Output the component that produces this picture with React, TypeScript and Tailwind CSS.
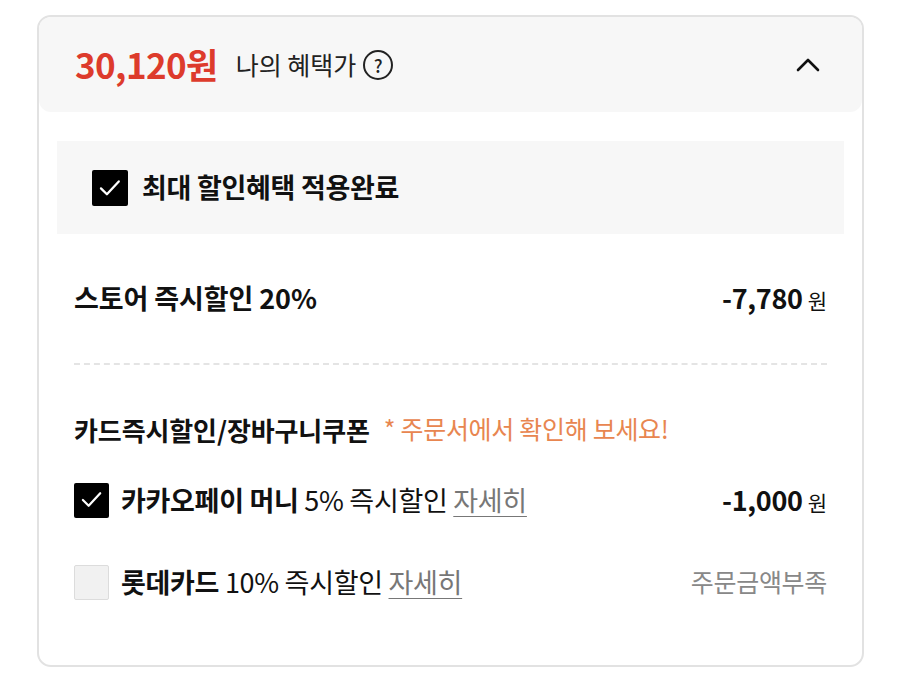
const font = "font-['Noto_Sans_CJK_KR','Noto_Sans',sans-serif]";

function Check({ on, size = 36 }: { on: boolean; size?: number }) {
  if (!on) {
    return (
      <span
        className="inline-block shrink-0 rounded-[2px] border border-[#dcdcdc] bg-[#f1f1f1]"
        style={{ width: size, height: size }}
      />
    );
  }
  return (
    <span
      className="inline-flex shrink-0 items-center justify-center rounded-[2px] bg-black"
      style={{ width: size, height: size }}
    >
      <svg width={size * 0.66} height={size * 0.66} viewBox="0 0 24 24" fill="none">
        <path d="M3 12.5l6 6L21 5.5" stroke="#fff" strokeWidth="2.3" strokeLinecap="round" strokeLinejoin="round" />
      </svg>
    </span>
  );
}

function Won({ amount }: { amount: string }) {
  return (
    <div className="flex items-baseline gap-[5px] text-[#111]">
      <span className="text-[27px] font-bold tracking-[-0.3px]">{amount}</span>
      <span className="text-[21px]">원</span>
    </div>
  );
}

export default function App() {
  return (
    <div className={`${font} min-h-[678px] bg-white pl-[37px] pt-[15px]`}>
      <div className="flex h-[652px] w-[827px] flex-col rounded-[14px] border-2 border-[#e2e2e2] bg-white">
        <header className="flex h-[95px] shrink-0 items-center justify-between rounded-[12px] bg-[#f7f7f7] pl-[36px] pr-[42px]">
          <div className="flex items-center">
            <span className="text-[35px] font-bold tracking-[-0.6px] text-[#dd3b2c]">30,120원</span>
            <span className="ml-[18px] text-[25px] text-[#222]">나의 혜택가</span>
            <span className="ml-[7px] flex h-[30px] w-[30px] items-center justify-center rounded-full border-2 border-[#222] text-[18px] font-medium leading-none text-[#222]">
              ?
            </span>
          </div>
          <svg width="24" height="16" viewBox="0 0 24 16" fill="none">
            <path d="M2 13L12 3l10 10" stroke="#111" strokeWidth="2.6" strokeLinecap="round" strokeLinejoin="round" />
          </svg>
        </header>

        <div className="mx-[18px] mt-[29px] flex h-[93px] items-center gap-[14px] bg-[#f7f7f7] pl-[35px]">
          <Check on />
          <span className="text-[27px] font-bold tracking-[-0.3px] text-[#111]">최대 할인혜택 적용완료</span>
        </div>

        <div className="mx-[35px] flex h-[129px] items-center justify-between">
          <span className="text-[27px] font-bold tracking-[-0.1px] text-[#111]">스토어 즉시할인 20%</span>
          <Won amount="-7,780" />
        </div>

        <div className="mx-[35px] border-t-2 border-dashed border-[#e4e4e4]" />

        <div className="mx-[35px] mt-[48px] flex h-[32px] items-center">
          <span className="text-[26px] font-bold tracking-[-0.1px] text-[#111]">카드즉시할인/장바구니쿠폰</span>
          <span className="ml-[14px] text-[25px] tracking-[-0.3px] text-[#e88650]">* 주문서에서 확인해 보세요!</span>
        </div>

        <div className="mx-[35px] mt-[37px] flex h-[36px] items-center justify-between">
          <div className="flex items-center gap-[12px]">
            <Check on size={35} />
            <span className="text-[27px] tracking-[-0.3px] text-[#111]">
              <b className="font-bold">카카오페이 머니</b> 5% 즉시할인{" "}
              <span className="text-[#777] underline decoration-1 underline-offset-[5px]">자세히</span>
            </span>
          </div>
          <Won amount="-1,000" />
        </div>

        <div className="mx-[35px] mt-[46px] flex h-[36px] items-center justify-between">
          <div className="flex items-center gap-[12px]">
            <Check on={false} size={35} />
            <span className="text-[27px] tracking-[-0.3px] text-[#111]">
              <b className="font-bold">롯데카드</b> 10% 즉시할인{" "}
              <span className="text-[#777] underline decoration-1 underline-offset-[5px]">자세히</span>
            </span>
          </div>
          <span className="text-[25px] tracking-[-0.3px] text-[#888]">주문금액부족</span>
        </div>
      </div>
    </div>
  );
}
